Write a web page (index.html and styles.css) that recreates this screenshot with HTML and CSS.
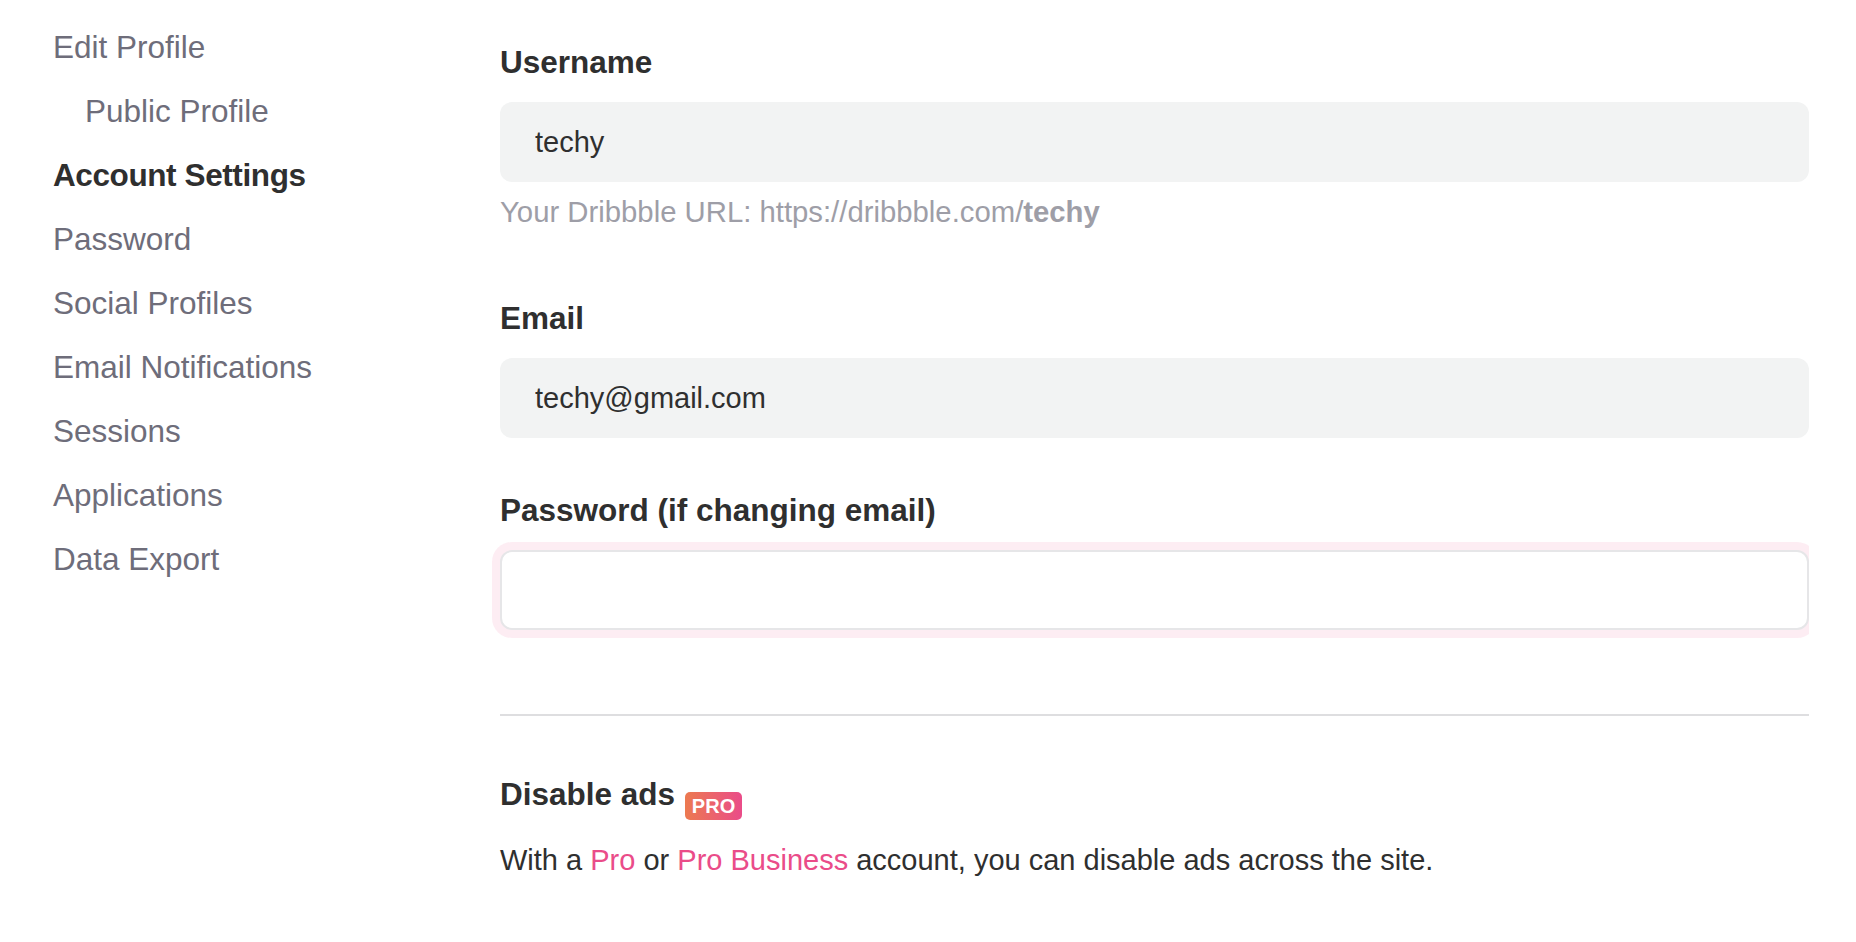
FILE: index.html
```html
<!DOCTYPE html>
<html lang="en">
<head>
<meta charset="utf-8">
<title>Account Settings</title>
<link rel="stylesheet" href="styles.css">
</head>
<body>
<div class="page">
  <nav class="sidebar">
    <a class="nav-item" href="#">Edit Profile</a>
    <a class="nav-item sub" href="#">Public Profile</a>
    <a class="nav-item active" href="#">Account Settings</a>
    <a class="nav-item" href="#">Password</a>
    <a class="nav-item" href="#">Social Profiles</a>
    <a class="nav-item" href="#">Email Notifications</a>
    <a class="nav-item" href="#">Sessions</a>
    <a class="nav-item" href="#">Applications</a>
    <a class="nav-item" href="#">Data Export</a>
  </nav>
  <main class="main">
    <div class="field field-username">
      <label class="label" for="username">Username</label>
      <input class="text-input" id="username" type="text" value="techy">
      <p class="hint">Your Dribbble URL: https://dribbble.com/<strong>techy</strong></p>
    </div>
    <div class="field field-email">
      <label class="label" for="email">Email</label>
      <input class="text-input" id="email" type="text" value="techy@gmail.com">
    </div>
    <div class="field field-password">
      <label class="label" for="password">Password (if changing email)</label>
      <input class="text-input focused" id="password" type="password" value="">
    </div>
    <hr class="divider">
    <h3 class="section-title">Disable ads <span class="pro-badge">PRO</span></h3>
    <p class="section-text">With a <a href="#">Pro</a> or <a href="#">Pro Business</a> account, you can disable ads across the site.</p>
  </main>
</div>
</body>
</html>
```
FILE: styles.css
```css
* {
  box-sizing: border-box;
}

html, body {
  margin: 0;
  padding: 0;
  background: #ffffff;
}

body {
  font-family: "Liberation Sans", Arial, Helvetica, sans-serif;
  color: #2f2f2f;
}

.page {
  display: flex;
  width: 1856px;
  min-height: 942px;
}

.sidebar {
  flex: 0 0 500px;
  display: flex;
  flex-direction: column;
  align-items: flex-start;
  padding: 15px 0 0 53px;
}

.nav-item {
  display: block;
  font-size: 31.5px;
  line-height: 64px;
  color: #6e6d7a;
  text-decoration: none;
  white-space: nowrap;
}

.nav-item.sub {
  padding-left: 32px;
}

.nav-item.active {
  color: #2f2f2f;
  font-weight: 700;
  letter-spacing: -0.4px;
}

.main {
  flex: 0 0 1309px;
  padding-top: 42px;
}

.field {
  display: flex;
  flex-direction: column;
}

.field-email {
  margin-top: 66px;
}

.field-password {
  margin-top: 52px;
}

.label {
  display: block;
  font-size: 31.5px;
  font-weight: 700;
  line-height: 40px;
  color: #2f2f2f;
  margin-bottom: 20px;
}

.text-input {
  display: block;
  width: 100%;
  height: 80px;
  margin: 0;
  padding: 0 33px;
  border: 2px solid transparent;
  border-radius: 12px;
  background: #f2f3f3;
  font-family: "Liberation Sans", Arial, Helvetica, sans-serif;
  font-size: 29px;
  color: #2f2f2f;
  outline: none;
}

.text-input.focused {
  background: #ffffff;
  border-color: #e6e6e8;
  box-shadow: 0 0 0 8px rgba(234, 76, 137, 0.1);
  clip-path: inset(-10px 0 -10px -10px);
}

.hint {
  margin: 10px 0 0;
  font-size: 29.3px;
  line-height: 40px;
  color: #9e9ea7;
}

.hint strong {
  font-weight: 700;
}

.divider {
  margin: 84px 0 0;
  height: 2px;
  border: 0;
  background: #dedee0;
}

.section-title {
  margin: 58px 0 0;
  font-size: 31.5px;
  font-weight: 700;
  line-height: 40px;
  color: #2f2f2f;
}

.pro-badge {
  position: relative;
  top: 8px;
  display: inline-block;
  height: 28px;
  margin-left: 1px;
  padding: 0 7px;
  border-radius: 5px;
  background: linear-gradient(90deg, #ec7a50, #ea4c89);
  color: #ffffff;
  font-size: 20px;
  font-weight: 700;
  line-height: 28px;
  vertical-align: baseline;
}

.section-text {
  margin: 26px 0 0;
  font-size: 29px;
  line-height: 40px;
  color: #2f2f2f;
}

.section-text a {
  color: #ea4c89;
  text-decoration: none;
}
```
